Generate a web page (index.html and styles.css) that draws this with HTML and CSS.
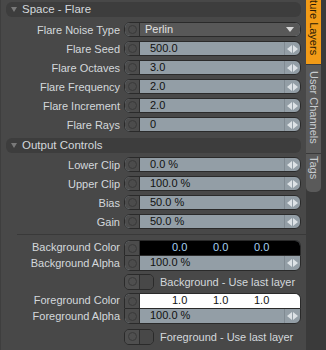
FILE: index.html
```html
<!DOCTYPE html>
<html lang="en">
<head>
    <meta charset="UTF-8">
    <title>Space - Flare</title>
    <link rel="stylesheet" href="styles.css">
</head>
<body>
    <div class="app">
        <div class="panel">
            <div class="section-head"><span class="caret"></span>Space - Flare</div>

            <div class="row">
                <span class="label">Flare Noise Type</span>
                <div class="ctl"><span class="knob"></span><div class="field menu">Perlin<span class="drop"></span></div></div>
            </div>
            <div class="row">
                <span class="label">Flare Seed</span>
                <div class="ctl"><span class="knob"></span><div class="field">500.0</div><span class="spin"></span></div>
            </div>
            <div class="row">
                <span class="label">Flare Octaves</span>
                <div class="ctl"><span class="knob"></span><div class="field">3.0</div><span class="spin"></span></div>
            </div>
            <div class="row">
                <span class="label">Flare Frequency</span>
                <div class="ctl"><span class="knob"></span><div class="field">2.0</div><span class="spin"></span></div>
            </div>
            <div class="row">
                <span class="label">Flare Increment</span>
                <div class="ctl"><span class="knob"></span><div class="field">2.0</div><span class="spin"></span></div>
            </div>
            <div class="row">
                <span class="label">Flare Rays</span>
                <div class="ctl"><span class="knob"></span><div class="field">0</div><span class="spin"></span></div>
            </div>

            <div class="section-head second"><span class="caret"></span>Output Controls</div>

            <div class="row">
                <span class="label">Lower Clip</span>
                <div class="ctl"><span class="knob"></span><div class="field">0.0 %</div><span class="spin"></span></div>
            </div>
            <div class="row">
                <span class="label">Upper Clip</span>
                <div class="ctl"><span class="knob"></span><div class="field">100.0 %</div><span class="spin"></span></div>
            </div>
            <div class="row">
                <span class="label">Bias</span>
                <div class="ctl"><span class="knob"></span><div class="field">50.0 %</div><span class="spin"></span></div>
            </div>
            <div class="row">
                <span class="label">Gain</span>
                <div class="ctl"><span class="knob"></span><div class="field">50.0 %</div><span class="spin"></span></div>
            </div>

            <div class="divider"></div>

            <div class="row color-row">
                <span class="label">Background Color</span>
                <div class="ctl top"><span class="knob"></span><div class="field swatch black"><span>0.0</span><span>0.0</span><span>0.0</span></div></div>
            </div>
            <div class="row alpha-row">
                <span class="label">Background Alpha</span>
                <div class="ctl bottom"><span class="knob"></span><div class="field">100.0 %</div><span class="spin"></span></div>
            </div>
            <div class="row check-row">
                <span class="label"></span>
                <div class="check-wrap"><span class="check"><span class="knob"></span><span class="box"></span></span>Background - Use last layer</div>
            </div>

            <div class="row color-row fg">
                <span class="label">Foreground Color</span>
                <div class="ctl top"><span class="knob"></span><div class="field swatch white"><span>1.0</span><span>1.0</span><span>1.0</span></div></div>
            </div>
            <div class="row alpha-row">
                <span class="label">Foreground Alpha</span>
                <div class="ctl bottom"><span class="knob"></span><div class="field">100.0 %</div><span class="spin"></span></div>
            </div>
            <div class="row check-row fg-check">
                <span class="label"></span>
                <div class="check-wrap"><span class="check"><span class="knob"></span><span class="box"></span></span>Foreground - Use last layer</div>
            </div>
        </div>

        <div class="tabs">
            <div class="tab active"><span>Texture Layers</span></div>
            <div class="tab channels"><span>User Channels</span></div>
            <div class="tab tags"><span>Tags</span></div>
        </div>
    </div>
</body>
</html>
```

FILE: styles.css
```css
body {
    margin: 0;
    background-color: #484848;
    font-family: "Liberation Sans", Arial, sans-serif;
    font-size: 11px;
    color: #d4d8dc;
}

.app {
    display: flex;
    height: 350px;
    overflow: hidden;
}

.panel {
    width: 296px;
    padding: 2px 5px 0 5px;
    display: flex;
    flex-direction: column;
    border-left: 1px solid #3e3e3e;
}

.section-head {
    height: 15px;
    line-height: 15px;
    background-color: #3d3d3d;
    border-radius: 6px;
    display: flex;
    align-items: center;
    margin-bottom: 5px;
    font-size: 11.5px;
}

.section-head.second {
    margin-top: 2px;
    margin-bottom: 4px;
}

.caret {
    width: 0;
    height: 0;
    border-left: 3px solid transparent;
    border-right: 3px solid transparent;
    border-top: 5px solid #7a7a7a;
    margin: 0 5px 0 5px;
}

.row {
    display: flex;
    align-items: center;
    height: 15px;
    margin-bottom: 4px;
}

.label {
    width: 114px;
    padding-right: 4px;
    text-align: right;
    white-space: nowrap;
    flex-shrink: 0;
}

.ctl {
    flex: 1;
    display: flex;
    height: 13px;
    border: 1px solid #2a2a2a;
    border-radius: 6px;
    overflow: hidden;
    background-color: #939ea6;
}

.knob {
    width: 14px;
    flex-shrink: 0;
    background-color: #4c4c4c;
    border-right: 1px solid #2e2e2e;
    display: flex;
    align-items: center;
    justify-content: center;
}

.knob::after {
    content: "";
    width: 9px;
    height: 9px;
    border-radius: 50%;
    border: 1px solid #3a3a3a;
    box-sizing: border-box;
}

.field {
    flex: 1;
    color: #111;
    line-height: 13px;
    padding-left: 10px;
}

.field.menu {
    background-color: #585858;
    color: #e2e2e2;
    padding-left: 5px;
    display: flex;
    justify-content: space-between;
    align-items: center;
}

.drop {
    width: 0;
    height: 0;
    border-left: 4px solid transparent;
    border-right: 4px solid transparent;
    border-top: 5px solid #d8d8d8;
    margin-right: 6px;
}

.spin {
    width: 15px;
    flex-shrink: 0;
    border-left: 1px solid #808a92;
    position: relative;
}

.spin::before, .spin::after {
    content: "";
    position: absolute;
    top: 3px;
    width: 0;
    height: 0;
    border-top: 4px solid transparent;
    border-bottom: 4px solid transparent;
}

.spin::before {
    left: 2px;
    border-right: 5px solid #dde2e6;
}

.spin::after {
    left: 8px;
    border-left: 5px solid #dde2e6;
}

.divider {
    height: 1px;
    background-color: #393939;
    margin: 1px 0 5px 11px;
    margin-right: -5px;
}

.color-row, .alpha-row {
    margin-bottom: 0;
}

.color-row .label, .alpha-row .label {
    line-height: 15px;
}

.color-row .ctl.top {
    height: 14px;
    border-bottom: none;
    border-radius: 6px 6px 0 0;
}

.alpha-row .ctl.bottom {
    height: 14px;
    border-radius: 0 0 6px 6px;
    border-top: 1px solid #2a2a2a;
}

.alpha-row {
    height: 16px;
}

.swatch {
    display: flex;
    padding-left: 32px;
}

.swatch span {
    width: 41px;
}

.swatch.black {
    background-color: #000;
    color: #a8d0f0;
}

.swatch.white {
    background-color: #fff;
    color: #111;
}

.check-row {
    margin-top: 3px;
    margin-bottom: 4px;
}

.check-row.fg-check {
    margin-top: 5px;
}

.check-wrap {
    display: flex;
    align-items: center;
    white-space: nowrap;
}

.check {
    display: flex;
    width: 28px;
    height: 14px;
    border: 1px solid #2a2a2a;
    border-radius: 5px;
    overflow: hidden;
    margin-right: 6px;
}

.check .knob {
    background-color: #4f4f4f;
}

.check .box {
    flex: 1;
    background-color: #484848;
}

.tabs {
    width: 20px;
    background-color: #3a3a3a;
    display: flex;
    flex-direction: column;
}

.tab {
    width: 15px;
    writing-mode: vertical-rl;
    display: flex;
    overflow: hidden;
    white-space: nowrap;
    background-color: #5a5a5a;
    color: #c8ccd0;
    border-bottom: 1px solid #3a3a3a;
    line-height: 15px;
    box-sizing: border-box;
}

.tab span {
    flex-shrink: 0;
}

.tab.active {
    height: 65px;
    background-color: #f29b17;
    color: #2a1a05;
    justify-content: flex-end;
    padding-bottom: 9px;
}

.tab.channels {
    height: 89px;
    padding-top: 6px;
}

.tab.tags {
    height: 38px;
    padding-top: 2px;
    border-radius: 0 0 5px 5px;
    border-bottom: none;
}
```
